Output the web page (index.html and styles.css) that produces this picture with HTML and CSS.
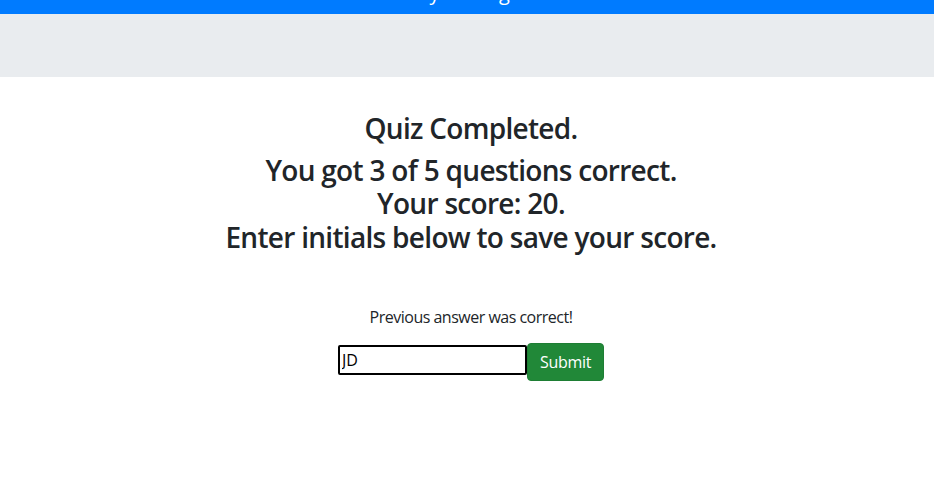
FILE: index.html
```html
<!DOCTYPE html>
<html lang="en">
<head>
<meta charset="utf-8">
<title>Quiz</title>
<link rel="stylesheet" href="styles.css">
</head>
<body>
<nav class="navbar"><span class="brand">Daily Coding Hub</span></nav>
<div class="jumbotron"></div>
<main class="container">
  <h3 class="title">Quiz Completed.</h3>
  <h3 class="summary">You got 3 of 5 questions correct.<br>Your score: 20.<br>Enter initials below to save your score.</h3>
  <p class="feedback">Previous answer was correct!</p>
  <form class="save-form">
    <input class="initials" type="text" value="JD">
    <button class="btn-submit" type="button">Submit</button>
  </form>
</main>
</body>
</html>
```

FILE: styles.css
```css
* { box-sizing: border-box; }
html, body { margin: 0; padding: 0; background: #fff; }
body {
  font-family: "Open Sans", "Noto Sans", sans-serif;
  color: #212529;
  font-size: 16px;
  line-height: 1.5;
}
.navbar {
  height: 14px;
  background: #007bff;
  overflow: hidden;
  display: flex;
  justify-content: center;
  padding-left: 14px;
}
.brand {
  color: #fff;
  font-size: 20px;
  line-height: 20px;
  margin-top: -17px;
}
.jumbotron {
  height: 63px;
  background: #e9ecef;
}
.container {
  display: flex;
  flex-direction: column;
  align-items: center;
  padding-top: 35px;
  padding-left: 8px;
  text-align: center;
}
.title, .summary {
  font-size: 28px;
  font-weight: 600;
  letter-spacing: -0.7px;
  line-height: 1.2;
  margin: 0 0 8px;
}
.feedback {
  margin: 43px 0 14px;
  letter-spacing: -0.5px;
}
.save-form {
  display: flex;
  align-items: flex-start;
}
.initials {
  width: 189px;
  height: 30px;
  margin-top: 2px;
  border: 2px solid #000;
  border-radius: 2px;
  padding: 1px 2px;
  font-family: inherit;
  font-size: 16px;
  color: #000;
}
.btn-submit {
  height: 38px;
  padding: 6px 12px;
  border: 1px solid #1e7e34;
  border-radius: 4px;
  background: #218838;
  color: #fff;
  font-family: inherit;
  font-size: 16px;
  line-height: 1.5;
  letter-spacing: -0.3px;
}
```
